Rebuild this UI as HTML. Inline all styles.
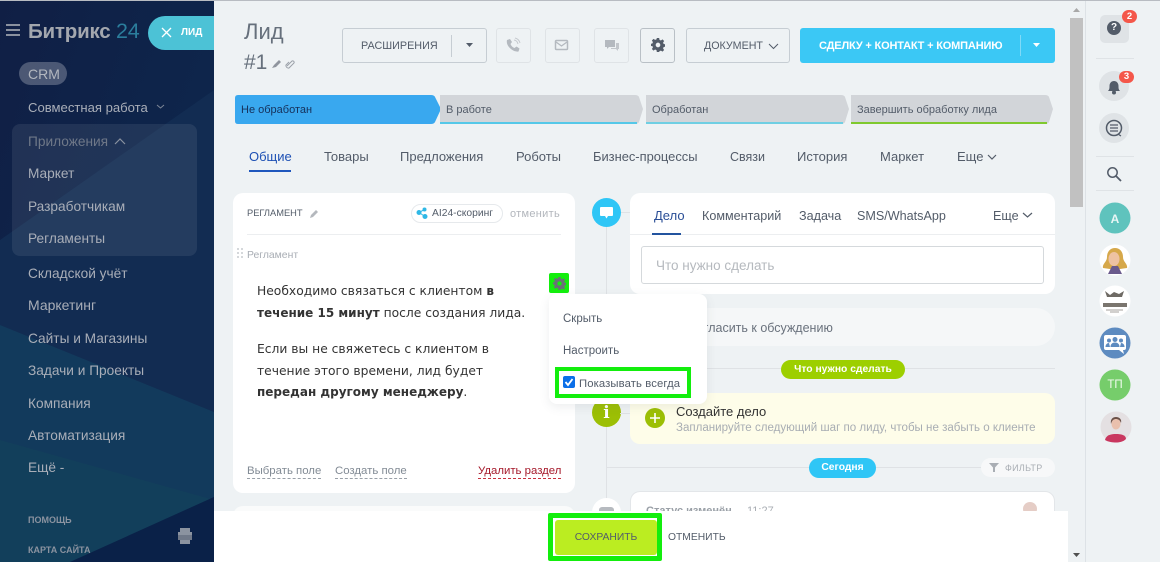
<!DOCTYPE html>
<html lang="ru"><head><meta charset="utf-8"><title>Лид</title>
<style>
html,body{margin:0;padding:0;width:1160px;height:562px;overflow:hidden;background:#eef2f4}
body{position:relative;font-family:"Liberation Sans","DejaVu Sans",sans-serif;color:#525c69}
.a{position:absolute;box-sizing:border-box}
.t{position:absolute;white-space:nowrap;line-height:20px;height:20px}
.side{color:#a9aeb8;font-size:13.7px}
.btn{position:absolute;box-sizing:border-box;border:1px solid #c6cdd3;border-radius:3px;height:35px;top:28px}
.b{font-weight:bold}
.tab{font-size:13px;color:#535c69;top:147px}
.body{font-family:"DejaVu Sans",sans-serif;font-size:12.3px;color:#333}
.body b{font-size:12px}
.st{font-size:11px;letter-spacing:0;top:100px}
.tl{font-size:12.6px;color:#535c69;top:206px}
.ln{font-size:11.4px;height:17px;line-height:20px;top:461px}
</style></head><body>

<!-- sidebar -->
<svg class="a" style="left:0;top:0" width="214" height="562">
<defs><linearGradient id="g" x1="0" y1="0" x2="1" y2="1"><stop offset="0" stop-color="#101f45"/><stop offset="1" stop-color="#0c2a50"/></linearGradient></defs>
<rect width="214" height="562" fill="url(#g)"/>
<polygon points="0,240 214,90 214,412 100,380 0,325" fill="#122c52"/>
<polygon points="0,325 214,412 214,497 70,562 0,562" fill="#123a5c"/>
<polygon points="0,440 214,500 70,562 0,562" fill="#123f5b"/>
<polygon points="214,497 214,562 70,562" fill="#0a2148"/>
<rect width="214" height="1" fill="#b8bcc2"/>
<rect x="12" y="124" width="185" height="132" rx="8" fill="#fff" fill-opacity=".08"/>
<rect x="19" y="62" width="48" height="23" rx="11.5" fill="#fff" fill-opacity=".25"/>
<path d="M6 25h14M6 30h14M6 35h14" stroke="#9ca1ac" stroke-width="1.7"/>
<path d="M157 105l3.500 3 3.500-3" fill="none" stroke="#7e8797"/>
<path d="M115 144l5-5 5 5" fill="none" stroke="#8a92a0" stroke-width="1.2"/>
<rect x="178" y="532" width="14" height="3" fill="#8b93a0"/><rect x="180" y="528" width="10" height="4" fill="#8b93a0"/><rect x="178" y="535" width="14" height="5" fill="#6f7888"/><rect x="180" y="540" width="10" height="4" fill="#8b93a0"/>
</svg>
<div class="t b" style="left:28px;top:20px;font-size:20.5px;color:#a3a7ae;height:22px;line-height:22px;letter-spacing:-.2px">Битрикс <span style="color:#2b7d9c;font-weight:normal;font-size:21.5px">24</span></div>
<div class="t side" style="left:28px;top:64px;font-size:14px;color:#b3b7bf">CRM</div>
<div class="t side" style="left:28px;top:98px;font-size:13.1px">Совместная работа</div>
<div class="t side" style="left:28px;top:132px;color:#6f7888">Приложения</div>
<div class="t side" style="left:28px;top:164px">Маркет</div>
<div class="t side" style="left:28px;top:197px">Разработчикам</div>
<div class="t side" style="left:28px;top:229px">Регламенты</div>
<div class="t side" style="left:28px;top:264px">Складской учёт</div>
<div class="t side" style="left:28px;top:295px;font-size:14px">Маркетинг</div>
<div class="t side" style="left:28px;top:329px">Сайты и Магазины</div>
<div class="t side" style="left:28px;top:361px">Задачи и Проекты</div>
<div class="t side" style="left:28px;top:394px">Компания</div>
<div class="t side" style="left:28px;top:426px">Автоматизация</div>
<div class="t side" style="left:28px;top:458px">Ещё -</div>
<div class="t b" style="left:28px;top:510px;font-size:9px;color:#8b93a0">ПОМОЩЬ</div>
<div class="t b" style="left:28px;top:540px;font-size:9px;color:#8b93a0">КАРТА САЙТА</div>
<div class="a" style="left:148px;top:16px;width:66px;height:34px;background:#4cc2d6;border-radius:17px 0 0 17px"></div>
<svg class="a" style="left:148px;top:16px" width="66" height="34"><path d="M14 12l9 9M23 12l-9 9" stroke="#fff" stroke-width="1.3"/></svg>
<div class="t b" style="left:181px;top:23px;font-size:10px;color:#fff">ЛИД</div>

<!-- header -->
<div class="t" style="left:244px;top:18px;height:28px;line-height:28px;font-size:22px;font-weight:normal;color:#66707c">Лид</div>
<div class="t" style="left:244px;top:50px;height:26px;line-height:26px;font-size:21px;color:#66707c">#1</div>
<svg class="a" style="left:271px;top:58px" width="24" height="12"><path d="M1 10l2-3 5-5 2 2-5 5z" fill="#8f959e"/><path d="M16 8l5-5a1.500 1.500 0 0 1 2 2l-5 5a2.500 2.500 0 0 1-3-3l3-3" fill="none" stroke="#9aa0a8" stroke-width="1"/></svg>

<div class="btn" style="left:342px;width:145px"></div>
<div class="a" style="left:451px;top:35px;width:1px;height:22px;background:#c6cdd3"></div>
<div class="t" style="left:361px;top:36px;font-size:10.8px;color:#535c69">РАСШИРЕНИЯ</div>
<svg class="a" style="left:464px;top:42px" width="12" height="6"><path d="M2 1h7l-3.500 4z" fill="#535c69"/></svg>
<div class="btn" style="left:496px;width:35px;border-color:#dfe3e6"></div>
<svg class="a" style="left:504px;top:37px" width="18" height="17"><path d="M3 3l3-1 2 3-1.500 2c.8 2 2 3.200 4 4l2-1.500 3 2-1 3c-6 1-13-6-11.500-11.500z" fill="#b4b9bf"/><path d="M10 3a5 5 0 0 1 4 4M11 1a7 7 0 0 1 5 5" fill="none" stroke="#c5c9ce"/></svg>
<div class="btn" style="left:545px;width:35px;border-color:#dfe3e6"></div>
<svg class="a" style="left:554px;top:39px" width="16" height="13"><rect x="1.500" y="1.500" width="12" height="9" rx="1" fill="none" stroke="#b4b9bf" stroke-width="1.500"/><path d="M2 3l5.500 4 5.500-4" fill="none" stroke="#b4b9bf" stroke-width="1.300"/></svg>
<div class="btn" style="left:594px;width:35px;border-color:#dfe3e6"></div>
<svg class="a" style="left:604px;top:38px" width="17" height="15"><path d="M1 2h10v7H5l-2 2V9H1z" fill="#b4b9bf"/><path d="M12 5h3v6h-1v2l-2-2H7v-1h5z" fill="#c2c6cb"/></svg>
<div class="btn" style="left:640px;width:35px;border-color:#b9c0c6"></div>
<svg class="a" style="left:651px;top:38px" width="14" height="14" viewBox="0 0 24 24"><path fill="#535c69" fill-rule="evenodd" d="M10 0h4l.6 3.200 2.400 1 2.700-1.800 2.800 2.800-1.800 2.700 1 2.400 3.200.6v4l-3.200.6-1 2.400 1.800 2.700-2.800 2.800-2.700-1.800-2.400 1L14 24h-4l-.6-3.200-2.400-1-2.700 1.800-2.800-2.800 1.800-2.700-1-2.400L-.9 14v-4l3.200-.6 1-2.400-1.800-2.700 2.800-2.800L7 3.300l2.400-1zM12 8a4 4 0 1 0 0 8 4 4 0 0 0 0-8z"/></svg>
<div class="btn" style="left:686px;width:104px"></div>
<div class="t" style="left:704px;top:36px;font-size:10.7px;color:#535c69">ДОКУМЕНТ</div>
<svg class="a" style="left:768px;top:43px" width="12" height="7"><path d="M1 1l4.500 4.500L10 1" fill="none" stroke="#535c69" stroke-width="1"/></svg>
<div class="a" style="left:800px;top:28px;width:255px;height:35px;background:#3bc8f5;border-radius:3px"></div>
<div class="a" style="left:1020px;top:35px;width:1px;height:21px;background:#7fdaf8"></div>
<div class="t b" style="left:819px;top:36px;font-size:11px;color:#fff;letter-spacing:-.17px">СДЕЛКУ + КОНТАКТ + КОМПАНИЮ</div>
<svg class="a" style="left:1031px;top:42px" width="12" height="6"><path d="M2 1h7l-3.500 4z" fill="#fff"/></svg>

<!-- stages -->
<svg class="a" style="left:235px;top:95px" width="820" height="29">
<path d="M3 0H196q3 0 4 2l6 12-6 13q-1 2-4 2H3q-3 0-3-3V3q0-3 3-3z" fill="#39a8ef"/>
<g fill="#d2d5d9">
<path d="M205 0H400q3 0 4 2l4 12-4 13q-1 2-4 2H205z"/>
<path d="M411 0H606q3 0 4 2l4 12-4 13q-1 2-4 2H411z"/>
<path d="M616 0H810q3 0 4 2l4 12-4 13q-1 2-4 2H616z"/>
</g>
<rect x="205" y="27" width="197" height="2" fill="#55c8e8"/>
<rect x="411" y="27" width="197" height="2" fill="#6fcfe3"/>
<rect x="616" y="27" width="196" height="2" fill="#7fc92e"/>
</svg>
<div class="t st" style="left:241px;color:#16305a">Не обработан</div>
<div class="t st" style="left:446px;color:#535c69">В работе</div>
<div class="t st" style="left:652px;color:#535c69">Обработан</div>
<div class="t st" style="left:857px;color:#535c69">Завершить обработку лида</div>

<!-- tabs -->
<div class="t tab" style="left:249px;color:#1d50b4">Общие</div>
<div class="a" style="left:249px;top:170px;width:42px;height:2px;background:#1f57bd"></div>
<div class="t tab" style="left:324px">Товары</div>
<div class="t tab" style="left:400px">Предложения</div>
<div class="t tab" style="left:516px">Роботы</div>
<div class="t tab" style="left:593px;font-size:12.9px">Бизнес-процессы</div>
<div class="t tab" style="left:730px;font-size:12.5px">Связи</div>
<div class="t tab" style="left:797px">История</div>
<div class="t tab" style="left:880px">Маркет</div>
<div class="t tab" style="left:957px">Еще</div>
<svg class="a" style="left:987px;top:154px" width="10" height="7"><path d="M1 1l4 4 4-4" fill="none" stroke="#535c69" stroke-width="1.200"/></svg>

<!-- left card -->
<div class="a" style="left:233px;top:193px;width:342px;height:300px;background:#fff;border-radius:10px"></div>
<div class="a" style="left:233px;top:506px;width:342px;height:20px;background:#fafbfb;border-radius:10px"></div>
<div class="t" style="left:247px;top:203px;font-size:9.3px;color:#535c69">РЕГЛАМЕНТ</div>
<svg class="a" style="left:309px;top:208px" width="11" height="11"><path d="M1 10l1-3 5-5 2 2-5 5z" fill="#b4b8bd"/></svg>
<div class="a" style="left:411px;top:204px;width:92px;height:19px;border:1px solid #e6e9ec;border-radius:10px"></div>
<svg class="a" style="left:416px;top:207px" width="12" height="13"><circle cx="3" cy="5.500" r="2.500" fill="#2fb8e6"/><circle cx="8.500" cy="2.500" r="2" fill="#2fb8e6"/><circle cx="9" cy="9.500" r="2.500" fill="#2fb8e6"/><path d="M3 5.500l5.500-3M3 5.500l6 4" stroke="#2fb8e6"/></svg>
<div class="t" style="left:432px;top:204px;font-size:10.3px;color:#535c69">AI24-скоринг</div>
<div class="t" style="left:510px;top:204px;font-size:11px;color:#b2b6bc;letter-spacing:.3px">отменить</div>
<div class="a" style="left:247px;top:234px;width:314px;height:1px;background:#eceef0"></div>
<svg class="a" style="left:236px;top:247px" width="8" height="14"><g fill="#d5d8db"><rect x="1" y="1" width="2" height="2"/><rect x="5" y="1" width="2" height="2"/><rect x="1" y="5" width="2" height="2"/><rect x="5" y="5" width="2" height="2"/><rect x="1" y="9" width="2" height="2"/><rect x="5" y="9" width="2" height="2"/></g></svg>
<div class="t" style="left:247px;top:246px;font-size:10.4px;color:#a8adb4">Регламент</div>
<div class="t body" style="left:257px;top:281px">Необходимо связаться с клиентом <b>в</b></div>
<div class="t body" style="left:257px;top:303px"><b>течение 15 минут</b> после создания лида.</div>
<div class="t body" style="left:257px;top:339px">Если вы не свяжетесь с клиентом в</div>
<div class="t body" style="left:257px;top:361px">течение этого времени, лид будет</div>
<div class="t body" style="left:257px;top:382px"><b>передан другому менеджеру</b>.</div>
<div class="t ln" style="left:247px;color:#828b95;border-bottom:1px dashed #99a0a8">Выбрать поле</div>
<div class="t ln" style="left:335px;color:#828b95;border-bottom:1px dashed #99a0a8">Создать поле</div>
<div class="t ln" style="left:478px;color:#a5182a;border-bottom:1px dashed #c8323f">Удалить раздел</div>

<!-- timeline -->
<div class="a" style="left:606px;top:225px;width:1px;height:290px;background:#dfe2e5"></div>
<div class="a" style="left:606px;top:368px;width:449px;height:1px;background:#dfe2e5"></div>
<div class="a" style="left:606px;top:467px;width:375px;height:1px;background:#dfe2e5"></div>
<div class="a" style="left:620px;top:212px;width:12px;height:1px;background:#dfe2e5"></div>
<div class="a" style="left:592px;top:198px;width:29px;height:29px;border-radius:50%;background:#2fc6f6"></div>
<svg class="a" style="left:599px;top:206px" width="15" height="15"><path d="M2 1h11a1 1 0 0 1 1 1v7a1 1 0 0 1-1 1H9l-1.500 2.500L6 10H2a1 1 0 0 1-1-1V2a1 1 0 0 1 1-1z" fill="#fff"/></svg>

<div class="a" style="left:630px;top:193px;width:425px;height:101px;background:#fff;border-radius:10px"></div>
<div class="t tl" style="left:654px;color:#2a4e96;font-size:13px">Дело</div>
<div class="t tl" style="left:702px">Комментарий</div>
<div class="t tl" style="left:799px">Задача</div>
<div class="t tl" style="left:857px">SMS/WhatsApp</div>
<div class="t tl" style="left:993px">Еще</div>
<svg class="a" style="left:1022px;top:212px" width="11" height="7"><path d="M1 1l4.500 4 4.500-4" fill="none" stroke="#535c69" stroke-width="1.200"/></svg>
<div class="a" style="left:630px;top:234px;width:425px;height:1px;background:#eceef0"></div>
<div class="a" style="left:652px;top:233px;width:29px;height:2px;background:#23549f"></div>
<div class="a" style="left:641px;top:246px;width:403px;height:38px;border:1px solid #d5d9dc;border-radius:3px;background:#fff"></div>
<div class="t" style="left:656px;top:256px;font-size:13.500px;color:#b5b9be">Что нужно сделать</div>

<div class="a" style="left:640px;top:308px;width:415px;height:38px;background:#f5f7f8;border-radius:19px"></div>
<div class="t" style="left:681px;top:318px;font-size:12.500px;color:#6a727d">Пригласить к обсуждению</div>

<div class="a" style="left:781px;top:360px;width:124px;height:19px;background:#9dcf00;border-radius:10px"></div>
<div class="t b" style="left:781px;width:124px;text-align:center;top:360px;font-size:10.3px;color:#fff">Что нужно сделать</div>

<div class="a" style="left:592px;top:398px;width:29px;height:29px;border-radius:50%;background:#9cbf05"></div>
<div class="t b" style="left:592px;width:29px;text-align:center;top:403px;font-family:'DejaVu Serif',serif;font-size:17px;color:#fff">i</div>
<div class="a" style="left:630px;top:393px;width:425px;height:51px;background:#fefde9;border-radius:10px"></div>
<div class="a" style="left:620px;top:413px;width:10px;height:1px;background:#dfe2e5"></div>
<div class="a" style="left:645px;top:408px;width:20px;height:20px;border-radius:50%;background:#9cbf05"></div>
<svg class="a" style="left:645px;top:408px" width="20" height="20"><path d="M10 5v10M5 10h10" stroke="#fff" stroke-width="1.600"/></svg>
<div class="t" style="left:676px;top:402px;font-size:13px;color:#333">Создайте дело</div>
<div class="t" style="left:676px;top:418px;font-size:11.550px;color:#a8adb3">Запланируйте следующий шаг по лиду, чтобы не забыть о клиенте</div>

<div class="a" style="left:809px;top:458px;width:67px;height:20px;background:#2fc6f6;border-radius:10px"></div>
<div class="t b" style="left:809px;width:67px;text-align:center;top:458px;font-size:10.3px;color:#fff">Сегодня</div>
<div class="a" style="left:981px;top:458px;width:74px;height:19px;background:#f7f8f9;border-radius:10px"></div>
<svg class="a" style="left:984px;top:461px" width="20" height="13"><path d="M5 2h10l-4 4.500V11H9V6.500z" fill="#a9aeb4"/></svg>
<div class="t" style="left:1005px;top:458px;font-size:9px;color:#a9aeb4;letter-spacing:.3px">ФИЛЬТР</div>

<div class="a" style="left:592px;top:498px;width:29px;height:29px;border-radius:50%;background:#fff"></div>
<div class="a" style="left:599px;top:507px;width:15px;height:12px;border-radius:3px;background:#b6babf"></div>
<div class="a" style="left:630px;top:491px;width:425px;height:40px;background:#fff;border:1px solid #e3e6e9;border-radius:10px"></div>
<div class="t b" style="left:646px;top:501px;font-size:11px;color:#9aa0a7">Статус изменён</div>
<div class="t" style="left:747px;top:501px;font-size:11px;color:#a8adb3">11:27</div>
<div class="a" style="left:1023px;top:502px;width:14px;height:14px;border-radius:50%;background:#e5cdc6"></div>

<!-- dropdown -->
<div class="a" style="left:549px;top:294px;width:158px;height:110px;background:#fff;border-radius:8px;box-shadow:0 3px 10px rgba(80,90,100,.1)"></div>
<div class="a" style="left:549px;top:273px;width:20px;height:20px;background:#13ee0d;border-radius:2px"></div>
<svg class="a" style="left:553px;top:277px" width="13" height="13" viewBox="0 0 24 24"><path fill="#6a7078" fill-rule="evenodd" d="M10 0h4l.6 3.200 2.400 1 2.700-1.800 2.800 2.800-1.800 2.700 1 2.400 3.200.6v4l-3.200.6-1 2.400 1.800 2.700-2.800 2.800-2.700-1.800-2.400 1L14 24h-4l-.6-3.200-2.400-1-2.700 1.800-2.800-2.800 1.800-2.700-1-2.400L-.9 14v-4l3.200-.6 1-2.400-1.800-2.700 2.800-2.800L7 3.300l2.400-1zM12 8a4 4 0 1 0 0 8 4 4 0 0 0 0-8z"/></svg>
<div class="t" style="left:563px;top:309px;font-size:11.500px;color:#535c69">Скрыть</div>
<div class="t" style="left:563px;top:341px;font-size:11.500px;color:#535c69">Настроить</div>
<div class="a" style="left:555px;top:367px;width:136px;height:31px;border:4px solid #13ee0d;background:#fff"></div>
<div class="a" style="left:563px;top:376px;width:12px;height:12px;background:#0b6fe8;border-radius:2px"></div>
<svg class="a" style="left:563px;top:376px" width="12" height="12"><path d="M2.500 6l2.500 3 4.500-6" fill="none" stroke="#fff" stroke-width="1.800"/></svg>
<div class="t" style="left:579px;top:374px;font-size:11.300px;color:#535c69;letter-spacing:.1px">Показывать всегда</div>

<!-- footer -->
<div class="a" style="left:214px;top:511px;width:854px;height:51px;background:#fff"></div>
<div class="a" style="left:548px;top:513px;width:114px;height:48px;background:#fff;border:5px solid #13ee0d;border-radius:2px"></div>
<div class="a" style="left:555px;top:520px;width:102px;height:35px;background:#bbed21;border-radius:3px"></div>
<div class="t" style="left:555px;width:102px;text-align:center;top:528px;font-size:10.300px;color:#535c69">СОХРАНИТЬ</div>
<div class="t" style="left:668px;top:528px;font-size:10.300px;color:#535c69">ОТМЕНИТЬ</div>

<!-- scrollbar -->
<svg class="a" style="left:1070px;top:0" width="15" height="562">
<rect y="18" width="13" height="189" fill="#c1c1c1"/>
<path d="M3 12l3.500-4 3.500 4z" fill="#a8a8a8"/>
<path d="M3 553h7l-3.500 4z" fill="#505050"/>
</svg>

<!-- right panel -->
<div class="a" style="left:1085px;top:0;width:75px;height:562px;background:#eef2f4;border-left:1px solid #dde2e6"></div>
<div class="a" style="left:0;top:0;width:1160px;height:1px;background:#b8bcc2"></div>
<svg class="a" style="left:1086px;top:0" width="74" height="562">
<rect x="14" y="15" width="29" height="28" rx="5" fill="#dfe3e6"/>
<circle cx="28" cy="28" r="7" fill="#535c69"/>
<line x1="10" y1="58.500" x2="48" y2="58.500" stroke="#dfe3e6"/>
<circle cx="28" cy="86" r="15" fill="#dfe3e6"/>
<path d="M22 91c1.500-1.500 1.500-3 1.500-5 0-3 2-5 4.500-5s4.500 2 4.500 5c0 2 0 3.500 1.500 5z" fill="#535c69"/>
<circle cx="28" cy="92.500" r="2" fill="#535c69"/>
<circle cx="28" cy="128" r="15" fill="#dfe3e6"/>
<circle cx="28" cy="128" r="7.500" fill="none" stroke="#535c69" stroke-width="1.500"/>
<path d="M24 125h8M24 128h8M24 131h8M32 134l3 2" stroke="#535c69" stroke-width="1.200"/>
<line x1="10" y1="156.500" x2="48" y2="156.500" stroke="#dfe3e6"/>
<circle cx="26.500" cy="172.500" r="4.700" fill="none" stroke="#535c69" stroke-width="1.500"/>
<path d="M30 176l5 5" stroke="#535c69" stroke-width="1.800"/>
<line x1="10" y1="190.500" x2="48" y2="190.500" stroke="#dfe3e6"/>
<circle cx="29" cy="218" r="15.500" fill="#5fc3bd"/>
<circle cx="29" cy="260" r="15.500" fill="#fff"/>
<path d="M17 268c-1-4 4-6 4-11 0-5 3-9 8-9s8 4 8 9c0 5 5 7 4 11l-7 1h-10z" fill="#d6a84a"/>
<ellipse cx="28" cy="259" rx="5.500" ry="7" fill="#eec2a2"/>
<path d="M22 274l4-8h6l4 8z" fill="#6a5a8c"/>
<circle cx="29" cy="301" r="15.500" fill="#fff"/>
<path d="M19 291l5 4 4-3 5 2 5-3-2 6H21z" fill="#6e6a64"/>
<rect x="17" y="303" width="24" height="4" fill="#7a756e"/>
<path d="M20 310h17M24 312h9" stroke="#a5a29c"/>
<circle cx="29" cy="343" r="15.500" fill="#5d8bc0"/>
<path d="M20 335h18a2 2 0 0 1 2 2v11a2 2 0 0 1-2 2h-1l1 4-5-4H20a2 2 0 0 1-2-2v-11a2 2 0 0 1 2-2z" fill="#fff"/>
<g fill="#5d8bc0"><circle cx="29" cy="339.500" r="2.500"/><path d="M24.500 347c0-3 2-4.500 4.500-4.500s4.500 1.500 4.500 4.500z"/><circle cx="23" cy="340.500" r="2"/><path d="M19.500 347c0-2.500 1.500-4 3.500-4l1 4z"/><circle cx="35" cy="340.500" r="2"/><path d="M38.500 347c0-2.500-1.500-4-3.500-4l-1 4z"/></g>
<circle cx="29" cy="385" r="15.500" fill="#76cd6b"/>
<circle cx="30" cy="427" r="15.500" fill="#e4e0e2"/>
<path d="M19 440c1-5 6-6 11-6s10 1 10 5c-3 3-7 3.500-10 3.500s-8-.5-11-2.500z" fill="#c9375f"/>
<ellipse cx="30" cy="424" rx="4.500" ry="5.500" fill="#e9c0ad"/>
<path d="M25 424c-1-5 2-7 5-7s6 2 5 6c-1-3-3-4-5-4s-4 1-5 5z" fill="#6b5148"/>
</svg>
<div class="a" style="left:1122px;top:10px;width:15px;height:13px;border-radius:7px;background:#f4574a"></div>
<div class="t b" style="left:1122px;width:15px;text-align:center;top:7px;font-size:9.500px;color:#fff">2</div>
<div class="a" style="left:1119px;top:71px;width:15px;height:12px;border-radius:7px;background:#f4574a"></div>
<div class="t b" style="left:1119px;width:15px;text-align:center;top:67px;font-size:9.500px;color:#fff">3</div>
<div class="t b" style="left:1099px;width:30px;text-align:center;top:18px;font-size:10px;color:#fff">?</div>
<div class="t" style="left:1100px;width:30px;text-align:center;top:209px;font-size:12px;font-weight:bold;color:#e9f6f5;">A</div>
<div class="t" style="left:1100px;width:30px;text-align:center;top:375px;font-size:11.500px;color:#f1fbef">ТП</div>
</body></html>
